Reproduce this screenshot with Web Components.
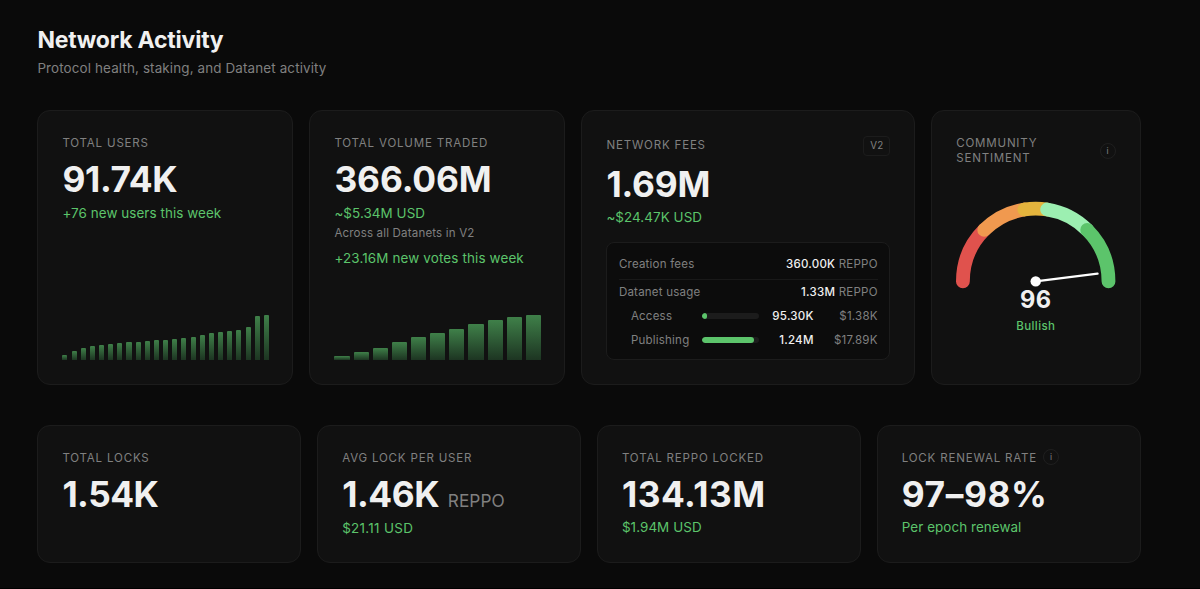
<!DOCTYPE html>
<html lang="en">
<head>
<meta charset="utf-8">
<title>Network Activity</title>
<style>
  body {
    margin: 0;
    background: #0a0a0a;
    color: #f0f0f0;
    font-family: Inter, "Liberation Sans", sans-serif;
    --card: #111111;
    --line: #1c1c1c;
    --muted: #808080;
    --green: #5cc46b;
  }
</style>
</head>
<body>
<network-activity></network-activity>

<script>
class NetworkActivity extends HTMLElement {
  constructor() {
    super();
    this.attachShadow({mode: 'open'});

    this.shadowRoot.innerHTML = `
    <style>
:host {
  display: block;
  box-sizing: border-box;
  height: 589px;
  padding: 28px 59.5px 0 37.4px;
  border-bottom: 1px solid #000;
  overflow: hidden;
}

h1 {
  margin: 0;
  font-size: 23px;
  font-weight: 650;
  line-height: 24px;
  letter-spacing: -0.22px;
}

.lead {
  margin: 5.7px 0 0;
  font-size: 13.44px;
  line-height: 20px;
  letter-spacing: 0.12px;
  color: var(--muted);
}

.top, .bottom {
  display: grid;
  gap: 16px;
}

.top {
  grid-template-columns: 256fr 256fr 333.8fr 209.3fr;
  grid-template-rows: 274.6px;
  margin-top: 32.3px;
}

.bottom {
  grid-template-columns: repeat(4, 1fr);
  grid-template-rows: 137.8px;
  margin-top: 40.2px;
}
    </style>

    <h1>Network Activity</h1>
    <p class="lead">Protocol health, staking, and Datanet activity</p>

    <div class="top">
      <stat-card>
        <span slot="label">Total users</span>
        <span slot="value" style="letter-spacing: -0.3px">91.74K</span>
        <sub-line>+76 new users this week</sub-line>
        <bar-chart slot="footer" gap="4.1" values="4.3 8.7 11.7 13.3 15 15.7 16.3 17.3 18 18.7 19.7 20 21 22 23 24.3 26.3 27.3 28.3 29.3 33 44 45"></bar-chart>
      </stat-card>

      <stat-card>
        <span slot="label">Total volume traded</span>
        <span slot="value" style="letter-spacing: -0.1px">366.06M</span>
        <sub-line>~$5.34M USD</sub-line>
        <sub-line kind="note">Across all Datanets in V2</sub-line>
        <sub-line style="margin-top: 6.3px; letter-spacing: 0.13px">+23.16M new votes this week</sub-line>
        <bar-chart slot="footer" gap="4" values="4 8 12 18 22.7 27 31 36 39.7 43 45"></bar-chart>
      </stat-card>

      <stat-card>
        <span slot="label">Network fees</span>
        <version-badge slot="extra">V2</version-badge>
        <span slot="value" style="letter-spacing: -0.2px">1.69M</span>
        <sub-line>~$24.47K USD</sub-line>
        <fee-table slot="footer"></fee-table>
      </stat-card>

      <sentiment-card score="96" mood="Bullish"></sentiment-card>
    </div>

    <div class="bottom">
      <stat-card>
        <span slot="label">Total locks</span>
        <span slot="value" style="letter-spacing: -0.5px">1.54K</span>
      </stat-card>

      <stat-card>
        <span slot="label">Avg lock per user</span>
        <span slot="value" style="letter-spacing: -0.4px">1.46K</span>
        <span slot="unit">REPPO</span>
        <sub-line style="margin-top: 0.9px; letter-spacing: 0.3px">$21.11 USD</sub-line>
      </stat-card>

      <stat-card>
        <span slot="label">Total REPPO locked</span>
        <span slot="value" style="letter-spacing: 0.5px">134.13M</span>
        <sub-line>$1.94M USD</sub-line>
      </stat-card>

      <stat-card>
        <span slot="label">Lock renewal rate<info-dot style="margin: -4px 0 -2px 6px"></info-dot></span>
        <span slot="value" style="letter-spacing: 0.6px">97–98%</span>
        <sub-line>Per epoch renewal</sub-line>
      </stat-card>
    </div>
    `;
  }
}

class StatCard extends HTMLElement {
  constructor() {
    super();
    this.attachShadow({mode: 'open'});

    this.shadowRoot.innerHTML = `
    <style>
:host {
  display: flex;
  flex-direction: column;
  box-sizing: border-box;
  min-width: 0;
  padding: 24.9px 24px 24px;
  border: 1px solid var(--line);
  border-radius: 13px;
  background: var(--card);
}

.head {
  display: flex;
  align-items: center;
  justify-content: space-between;
  min-height: 15.4px;
}

.label {
  display: flex;
  align-items: center;
  font-size: 11.52px;
  line-height: 15.4px;
  letter-spacing: 0.82px;
  text-transform: uppercase;
  color: var(--muted);
}

slot[name="label"]::slotted(span) {
  display: flex;
  align-items: center;
  height: 15.4px;
}

.value {
  display: flex;
  align-items: baseline;
  height: 38px;
  margin: 9.9px 0 3.4px;
  font-size: 35.3px;
  font-weight: 700;
  line-height: 38px;
}

slot[name="unit"] {
  display: block;
  margin-left: 8.5px;
  font-size: 17.3px;
  font-weight: 400;
  line-height: 20px;
  letter-spacing: 0;
  color: var(--muted);
}

slot[name="footer"] {
  display: block;
  margin-top: auto;
}
    </style>

    <div class="head">
      <div class="label"><slot name="label"></slot></div>
      <slot name="extra"></slot>
    </div>
    <div class="value"><slot name="value"></slot><slot name="unit"></slot></div>
    <slot></slot>
    <slot name="footer"></slot>
    `;
  }
}

class SubLine extends HTMLElement {
  constructor() {
    super();
    this.attachShadow({mode: 'open'});

    this.shadowRoot.innerHTML = `
    <style>
:host {
  display: block;
  font-size: 13.44px;
  line-height: 20px;
  letter-spacing: 0.06px;
  color: var(--green);
}

:host([kind="note"]) {
  margin-top: 2.9px;
  font-size: 11.52px;
  line-height: 16px;
  letter-spacing: 0.18px;
  color: var(--muted);
}
    </style>
    <slot></slot>
    `;
  }
}

class VersionBadge extends HTMLElement {
  constructor() {
    super();
    this.attachShadow({mode: 'open'});

    this.shadowRoot.innerHTML = `
    <style>
:host {
  display: block;
  padding: 0 5.9px;
  border: 1px solid var(--line);
  border-radius: 4px;
  font-size: 9.8px;
  line-height: 18px;
  letter-spacing: 0.1px;
  color: var(--muted);
}
    </style>
    <slot></slot>
    `;
  }
}

class InfoDot extends HTMLElement {
  constructor() {
    super();
    this.attachShadow({mode: 'open'});

    this.shadowRoot.innerHTML = `
    <style>
:host {
  display: inline-flex;
  flex: none;
  align-items: center;
  justify-content: center;
  box-sizing: border-box;
  width: 16px;
  height: 16px;
  border: 1px solid #1f1f1f;
  border-radius: 50%;
  font-size: 8.6px;
  line-height: 14px;
  letter-spacing: 0;
  text-transform: none;
  color: #858585;
}
    </style>
    <span>i</span>
    `;
  }
}

class BarChart extends HTMLElement {
  connectedCallback() {
    this.attachShadow({mode: 'open'});
    const values = this.getAttribute('values').split(' ');

    this.shadowRoot.innerHTML = `
    <style>
:host {
  display: flex;
  align-items: flex-end;
  gap: ${this.getAttribute('gap')}px;
  height: 45px;
  margin-right: -0.6px;
}

i {
  flex: 1;
  border-radius: 1px 1px 0 0;
  background: linear-gradient(#3f8049, #1d3522);
}
    </style>
    ${values.map((v) => `<i style="height: ${v}px"></i>`).join('')}
    `;
  }
}

class FeeTable extends HTMLElement {
  constructor() {
    super();
    this.attachShadow({mode: 'open'});

    this.shadowRoot.innerHTML = `
    <style>
:host {
  display: block;
  box-sizing: border-box;
  height: 117.4px;
  padding: 12.6px 11.5px 0;
  border: 1px solid var(--line);
  border-radius: 8px;
  background: #0c0c0c;
  font-size: 11.52px;
  line-height: 16px;
  letter-spacing: 0.22px;
  color: var(--muted);
}

.row {
  display: flex;
  justify-content: space-between;
}

.row.first {
  padding-bottom: 7px;
  margin-bottom: 4.6px;
  border-bottom: 1px solid #191919;
}

.part {
  display: grid;
  grid-template-columns: 71.4px 56.5px 1fr 64px;
  align-items: center;
  margin-top: 7.4px;
  padding-left: 12px;
  text-align: right;
}

.part + .part {
  margin-top: 8.4px;
}

.part span:first-child {
  text-align: left;
}

b {
  font-weight: 500;
  letter-spacing: 0.25px;
  color: #f0f0f0;
}

.track {
  height: 5.8px;
  border-radius: 3px;
  background: #1c1c1c;
  overflow: hidden;
}

.fill {
  height: 100%;
  border-radius: 3px;
  background: var(--green);
}
    </style>

    <div class="row first"><span>Creation fees</span><span><b>360.00K</b> REPPO</span></div>
    <div class="row"><span>Datanet usage</span><span><b>1.33M</b> REPPO</span></div>
    <div class="part">
      <span>Access</span>
      <div class="track"><div class="fill" style="width: 8.5%"></div></div>
      <b>95.30K</b>
      <span>$1.38K</span>
    </div>
    <div class="part">
      <span>Publishing</span>
      <div class="track"><div class="fill" style="width: 92%"></div></div>
      <b>1.24M</b>
      <span>$17.89K</span>
    </div>
    `;
  }
}

class SentimentCard extends HTMLElement {
  connectedCallback() {
    this.attachShadow({mode: 'open'});
    const score = Number(this.getAttribute('score'));

    // maps 0-100 to a point on the half circle
    const point = (pct, r) => {
      const a = Math.PI * (1 - pct / 100);
      return `${(79.7 + r * Math.cos(a)).toFixed(2)} ${(81.4 - r * Math.sin(a)).toFixed(2)}`;
    };
    const zones = [
      [0, 25, '#e0524d'],
      [25, 45, '#f0994f'],
      [45, 55, '#e4b43d'],
      [55, 75, '#9cefb1'],
      [75, 100, '#5cc46b'],
    ];

    this.shadowRoot.innerHTML = `
    <style>
:host {
  display: flex;
  flex-direction: column;
  box-sizing: border-box;
  min-width: 0;
  padding: 24.9px 24px 0;
  border: 1px solid var(--line);
  border-radius: 13px;
  background: var(--card);
}

.head {
  display: flex;
  align-items: center;
  justify-content: space-between;
  font-size: 11.52px;
  line-height: 15.6px;
  letter-spacing: 0.82px;
  text-transform: uppercase;
  color: var(--muted);
}

.label {
  width: 100px;
}

svg {
  display: block;
  width: 100%;
  height: 88px;
  margin-top: 32.5px;
  overflow: visible;
}

.score {
  margin-top: 0.6px;
  font-size: 23.6px;
  font-weight: 700;
  line-height: 24px;
  letter-spacing: 0.4px;
  text-align: center;
}

.mood {
  margin-top: 5.8px;
  font-size: 11.52px;
  font-weight: 500;
  line-height: 16px;
  letter-spacing: 0.4px;
  text-align: center;
  color: var(--green);
}
    </style>

    <div class="head"><span class="label">Community sentiment</span><info-dot></info-dot></div>
    <svg fill="none" stroke-linecap="round">
      ${zones.map(([from, to, color]) => `<path d="M${point(from, 72.8)} A72.8 72.8 0 0 1 ${point(to, 72.8)}" stroke="${color}" stroke-width="13.8"/>`).join('')}
      <path d="M79.7 81.4 L${point(score, 62.3)}" stroke="#fff" stroke-width="2.4"/>
      <circle cx="79.7" cy="81.4" r="5.2" fill="#fff"/>
    </svg>
    <div class="score">${score}</div>
    <div class="mood">${this.getAttribute('mood')}</div>
    `;
  }
}

customElements.define('info-dot', InfoDot);
customElements.define('version-badge', VersionBadge);
customElements.define('sub-line', SubLine);
customElements.define('bar-chart', BarChart);
customElements.define('fee-table', FeeTable);
customElements.define('stat-card', StatCard);
customElements.define('sentiment-card', SentimentCard);
customElements.define('network-activity', NetworkActivity);
</script>
</body>
</html>
